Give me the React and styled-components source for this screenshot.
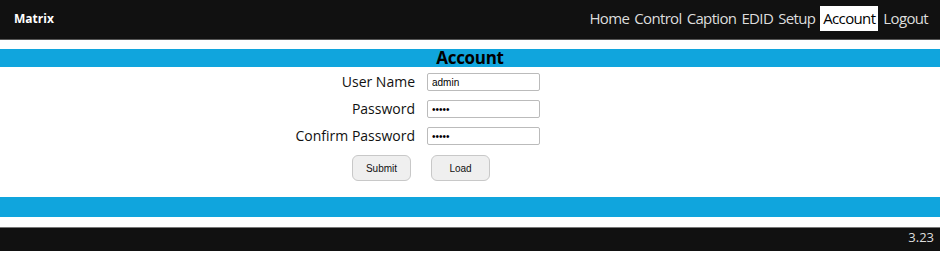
// Import: Dependencies
import React from "react";
import styled, { createGlobalStyle } from "styled-components";

const NAV = ["Home", "Control", "Caption", "EDID", "Setup", "Account", "Logout"];

// page: App
function App() {
  return (
    <>
      <GlobalStyle />
      <Header>
        <Brand>Matrix</Brand>
        <Nav>
          {NAV.map((item) => (
            <NavItem key={item} $active={item === "Account"}>
              {item}
            </NavItem>
          ))}
        </Nav>
      </Header>

      <TitleBar>Account</TitleBar>

      <Form>
        <Label>User Name</Label>
        <Input type="text" defaultValue="admin" />
        <Label>Password</Label>
        <Input type="password" defaultValue="admin" />
        <Label>Confirm Password</Label>
        <Input type="password" defaultValue="admin" />
      </Form>

      <Buttons>
        <Button>Submit</Button>
        <Button>Load</Button>
      </Buttons>

      <Band />

      <Footer>3.23</Footer>
    </>
  );
}

export default App;

// Styled: GlobalStyle
const GlobalStyle = createGlobalStyle`
  body {
    margin: 0;
    background: #fff;
    font-family: "Open Sans", "Noto Sans", sans-serif;
  }
`;

// Styled: Header
const Header = styled.div`
  background: #111;
  height: 39px;
  display: flex;
  align-items: center;
  justify-content: space-between;
  padding: 0 12px 0 14px;
  border-bottom: 1px solid #555;
`;

// Styled: Brand
const Brand = styled.div`
  color: #fff;
  font-weight: 700;
  font-size: 12px;
  margin-top: -2px;
`;

// Styled: Nav
const Nav = styled.div`
  display: flex;
  align-items: center;
  gap: 5px;
  margin-top: -2px;
`;

// Styled: NavItem
const NavItem = styled.span`
  font-size: 15px;
  letter-spacing: -0.65px;
  line-height: 25px;
  padding: 0 ${(p) => (p.$active ? "3px" : "0")};
  color: ${(p) => (p.$active ? "#000" : "#ddd")};
  background: ${(p) => (p.$active ? "#fff" : "transparent")};
`;

// Styled: TitleBar
const TitleBar = styled.div`
  margin-top: 9px;
  background: #10a5dd;
  height: 18px;
  line-height: 18px;
  text-align: center;
  font-size: 17px;
  font-weight: 700;
  color: #000;
  letter-spacing: -0.3px;
`;

// Styled: Form
const Form = styled.div`
  display: grid;
  grid-template-columns: 415px 113px;
  grid-auto-rows: 18px;
  column-gap: 12px;
  row-gap: 9px;
  align-items: center;
  margin-top: 6px;
`;

// Styled: Label
const Label = styled.label`
  text-align: right;
  font-size: 14px;
  line-height: 18px;
  color: #111;
`;

// Styled: Input
const Input = styled.input`
  box-sizing: border-box;
  width: 113px;
  height: 18px;
  border: 1px solid #bbb;
  border-radius: 2px;
  padding: 0 4px;
  font-family: "Liberation Sans", Arial, sans-serif;
  font-size: 10px;
  color: #000;
  outline: none;
`;

// Styled: Buttons
const Buttons = styled.div`
  display: flex;
  gap: 20px;
  padding-left: 352px;
  margin-top: 10px;
`;

// Styled: Button
const Button = styled.button`
  box-sizing: border-box;
  width: 59px;
  height: 26px;
  background: #efefef;
  border: 1px solid #c8c8c8;
  border-radius: 6px;
  font-family: "Liberation Sans", Arial, sans-serif;
  font-size: 10px;
  color: #111;
`;

// Styled: Band
const Band = styled.div`
  margin-top: 16px;
  background: #10a5dd;
  height: 20px;
`;

// Styled: Footer
const Footer = styled.div`
  margin-top: 10px;
  background: #111;
  border-top: 1px solid #777;
  height: 23px;
  text-align: right;
  padding-right: 6px;
  font-size: 13px;
  line-height: 18px;
  color: #ddd;
`;
